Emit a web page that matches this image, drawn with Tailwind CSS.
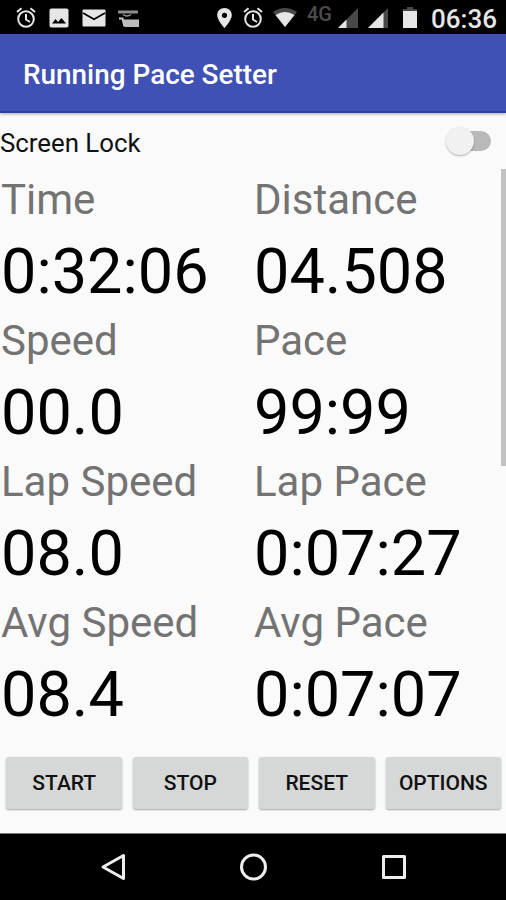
<!DOCTYPE html>
<html lang="en">
<head>
  <meta charset="UTF-8">
  <title>Running Pace Setter</title>
  <script src="https://cdn.jsdelivr.net/npm/@tailwindcss/browser@4"></script>
</head>
<body class="w-[506px] h-[900px] overflow-hidden flex flex-col bg-[#fafafa] font-[Roboto,sans-serif] text-black">
  <!-- Status bar -->
  <div class="h-[34px] shrink-0 bg-black flex items-center justify-between pl-4 pr-[11px] text-[#e6e6e6]">
    <div class="flex items-center gap-[13px] pt-px">
      <svg class="w-5 h-[22px]" viewBox="0 0 20 22" fill="none" stroke="currentColor" stroke-width="2">
        <circle cx="10" cy="12" r="7.8"/><path d="M10 7v5.5l4 2.5M1 5l4.5-3.7M19 5l-4.5-3.7"/>
      </svg>
      <svg class="w-5 h-5" viewBox="0 0 20 20">
        <rect x=".5" y=".5" width="19" height="19" rx="2" fill="currentColor"/><path d="M3 15.5l3.5-4.5 2.5 3 3.5-4 4.500 5.500z" fill="#000"/>
      </svg>
      <svg class="w-6 h-[18px]" viewBox="0 0 24 18">
        <rect x=".5" y=".5" width="23" height="17" rx="1" fill="currentColor"/><path d="M1 4l11 6.2L23 4" fill="none" stroke="#000" stroke-width="1.8"/>
      </svg>
      <svg class="w-[22px] h-5 -ml-px mt-[3px]" viewBox="0 0 22 20" fill="none">
        <path d="M0 1.500h20v3H0z" fill="#8f8f8f"/><path d="M5 5.500q4 3 8 0" stroke="#999" stroke-width="1.5"/><path d="M1 9.500h3.500l2 8" stroke="#c8c8c8" stroke-width="2"/><path d="M5 10.500h16v7.500H7z" fill="#bdbdbd"/>
      </svg>
    </div>
    <div class="flex items-center pt-px">
      <svg class="w-[15px] h-5 mr-[11px]" viewBox="0 0 15 20">
        <path d="M7.5 0C3.300 0 .2 3.100.2 7.200c0 5 7.300 12.800 7.300 12.800s7.300-7.800 7.300-12.800C14.800 3.100 11.700 0 7.500 0zm0 4.700a2.600 2.600 0 110 5.200 2.600 2.600 0 010-5.200z" fill="currentColor" fill-rule="evenodd"/>
      </svg>
      <svg class="w-5 h-[22px] mr-[10px]" viewBox="0 0 20 22" fill="none" stroke="currentColor" stroke-width="2">
        <circle cx="10" cy="12" r="7.8"/><path d="M10 7v5.5l4 2.5M1 5l4.5-3.7M19 5l-4.5-3.7"/>
      </svg>
      <svg class="w-6 h-[19px] mr-[10px]" viewBox="0 0 24 19">
        <path d="M0 4Q12-4 24 4L12 19z" fill="#484848"/><path d="M2.500 7q9.500-6 19 0L12 19z" fill="currentColor"/>
      </svg>
      <span class="w-[25px] text-[20px] leading-5 text-[#4c4c4c] mr-[6px] -mt-[8px] font-medium">4G</span>
      <svg class="w-5 h-5 mr-[10px]" viewBox="0 0 20 20"><path d="M20 0v20H0z" fill="#484848"/><path d="M8.500 11.500V20H0z" fill="currentColor"/></svg>
      <svg class="w-5 h-5 mr-[15px]" viewBox="0 0 20 20"><path d="M20 0v20H0z" fill="#484848"/><path d="M15.500 4.500V20H0z" fill="currentColor"/></svg>
      <svg class="w-[14px] h-[21px] mr-[14px]" viewBox="0 0 14 21"><path d="M4 0h6v2h4v3H0V2h4z" fill="#484848"/><path d="M0 4h14v17H0z" fill="currentColor"/></svg>
      <span class="w-[64px] text-[26px] leading-[33px] font-medium pt-1">06:36</span>
    </div>
  </div>

  <!-- App bar -->
  <header class="h-[79px] shrink-0 bg-[#3f51b5] border-b-2 border-[#2c409f] shadow-[0_1px_3px_rgba(0,0,0,0.35)] flex items-center pl-[23px] pt-[5px]">
    <h1 class="text-[27.900px] leading-8 font-medium text-white">Running Pace Setter</h1>
  </header>

  <div class="h-14 shrink-0 flex items-center justify-between pr-[15px] pt-[3px]">
    <span class="text-[25.800px] leading-8 text-[#111]">Screen Lock</span>
    <div class="w-[45px] h-[30px] flex items-center -mt-[3px]">
      <div class="size-[28px] shrink-0 rounded-full bg-[#f1f1f1] shadow-[0_1px_2px_rgba(0,0,0,0.3)] z-10"></div>
      <div class="w-[31px] h-5 shrink-0 -ml-[14px] rounded-full bg-[#b9b9b9]"></div>
    </div>
  </div>

  <!-- Readings -->
  <main class="flex h-[580px] shrink-0 pt-[2px]">
    <div id="readings" class="grid grid-cols-2 w-[506px] shrink-0 content-start"></div>
    <div class="w-[5px] h-[297px] -ml-[5px] -mt-[2px] bg-[#c2c2c2] shrink-0"></div>
  </main>

  <!-- Buttons -->
  <div class="h-[84px] shrink-0 grid grid-cols-4 gap-x-[11px] pl-[6px] pr-[5px] pt-[8px] items-start text-[21px] font-medium text-[#111]">
    <button class="h-[52px] pt-[2px] pl-px rounded-[3px] bg-[#d6d8d7] shadow-[0_1px_2px_rgba(0,0,0,0.35)]">START</button>
    <button class="h-[52px] pt-[2px] rounded-[3px] bg-[#d6d8d7] shadow-[0_1px_2px_rgba(0,0,0,0.35)]">STOP</button>
    <button class="h-[52px] pt-[2px] rounded-[3px] bg-[#d6d8d7] shadow-[0_1px_2px_rgba(0,0,0,0.35)]">RESET</button>
    <button class="h-[52px] pt-[2px] rounded-[3px] bg-[#d6d8d7] shadow-[0_1px_2px_rgba(0,0,0,0.35)]">OPTIONS</button>
  </div>

  <!-- Navigation bar -->
  <nav class="grow bg-black border-t border-[#777] flex items-center justify-between pl-[100px] pr-[98px]">
    <svg class="size-7" viewBox="0 0 28 28" fill="none" stroke="#eee" stroke-width="3" stroke-linejoin="round"><path d="M23.500 2.500v23L3 14z"/></svg>
    <svg class="size-7" viewBox="0 0 28 28" fill="none" stroke="#eee" stroke-width="3"><circle cx="13.500" cy="14" r="12"/></svg>
    <svg class="size-7" viewBox="0 0 28 28" fill="none" stroke="#eee" stroke-width="3" stroke-linejoin="round"><rect x="3.500" y="3.500" width="21" height="21"/></svg>
  </nav>

  <script>
    const readings = [
      ['Time', '0:32:06'], ['Distance', '04.508'],
      ['Speed', '00.0'], ['Pace', '99:99'],
      ['Lap Speed', '08.0'], ['Lap Pace', '0:07:27'],
      ['Avg Speed', '08.4'], ['Avg Pace', '0:07:07']
    ];

    document.getElementById('readings').innerHTML = readings.map(([label, value]) => `
      <div class="h-[141px] pl-px">
        <p class="text-[42px] leading-[57px] text-[#737373]">${label}</p>
        <p class="text-[63px] leading-[81px] pt-[3px]">${value}</p>
      </div>`).join('');
  </script>
</body>
</html>
